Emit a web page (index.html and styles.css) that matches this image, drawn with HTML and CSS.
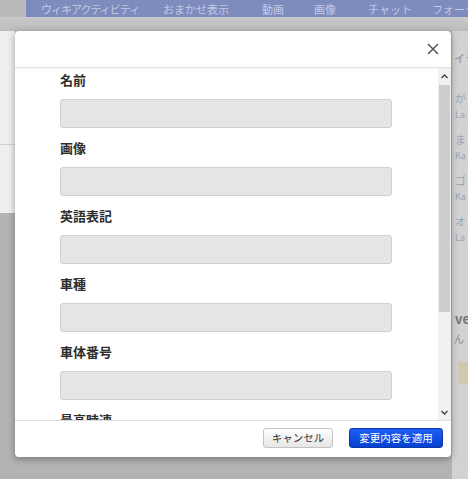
FILE: index.html
```html
<!DOCTYPE html>
<html lang="ja">
<head>
<meta charset="utf-8">
<title>編集</title>
<link rel="stylesheet" href="styles.css">
</head>
<body>
<div class="top">
  <div class="top-gap"></div>
  <nav class="navbar">
    <span class="nav-item w1">ウィキアクティビティ</span>
    <span class="nav-item w2">おまかせ表示</span>
    <span class="nav-item w3">動画</span>
    <span class="nav-item w4">画像</span>
    <span class="nav-item w5">チャット</span>
    <span class="nav-item">フォーラム</span>
  </nav>
</div>
<div class="band"></div>
<div class="main">
  <div class="leftcol">
    <div class="leftbox-a"></div>
    <div class="leftbox-b"></div>
  </div>
  <div class="center"></div>
  <aside class="rightcol">
    <div class="side-head">イラスト</div>
    <div class="side-list">
      <div class="side-item"><span class="jp">が</span><span class="en">La</span></div>
      <div class="side-item"><span class="jp">ま</span><span class="en">Ka</span></div>
      <div class="side-item"><span class="jp">ゴ</span><span class="en">Ka</span></div>
      <div class="side-item"><span class="jp">オ</span><span class="en">La</span></div>
    </div>
    <div class="side-title">ve!</div>
    <div class="side-sub">ん</div>
    <div class="side-pic"></div>
  </aside>
</div>

<div class="modal">
  <div class="modal-head">
    <svg class="close" width="12" height="12" viewBox="0 0 12 12"><path d="M1 1 L11 11 M11 1 L1 11" stroke="#555" stroke-width="1.5" fill="none"/></svg>
  </div>
  <div class="modal-body">
    <div class="content">
      <div class="field"><label class="label">名前</label><div class="input"></div></div>
      <div class="field"><label class="label">画像</label><div class="input"></div></div>
      <div class="field"><label class="label">英語表記</label><div class="input"></div></div>
      <div class="field"><label class="label">車種</label><div class="input"></div></div>
      <div class="field"><label class="label">車体番号</label><div class="input"></div></div>
      <div class="field"><label class="label">最高時速</label><div class="input"></div></div>
    </div>
    <div class="scrollbar">
      <div class="sb-btn"><svg width="7" height="5" viewBox="0 0 7 5"><path d="M0.5 4 L3.5 1 L6.5 4" stroke="#444" stroke-width="1.4" fill="none"/></svg></div>
      <div class="sb-thumb"></div>
      <div class="sb-track"></div>
      <div class="sb-btn"><svg width="7" height="5" viewBox="0 0 7 5"><path d="M0.5 1 L3.5 4 L6.5 1" stroke="#444" stroke-width="1.4" fill="none"/></svg></div>
    </div>
  </div>
  <div class="modal-foot">
    <button class="btn btn-cancel">キャンセル</button>
    <button class="btn btn-apply">変更内容を適用</button>
  </div>
</div>
</body>
</html>
```
FILE: styles.css
```css
* { box-sizing: border-box; }
html, body { margin: 0; padding: 0; }
body {
  width: 468px;
  height: 479px;
  overflow: hidden;
  background: #b3b3b3;
  font-family: "Noto Sans CJK JP", "Noto Sans", sans-serif;
  position: relative;
}

/* background page */
.top { display: flex; height: 17px; }
.top-gap { width: 26px; background: #bababa; }
.navbar {
  flex: 1;
  background: #7d8bbd;
  display: flex;
  align-items: center;
  padding-left: 15px;
  font-size: 11px;
  color: #c3cae4;
  white-space: nowrap;
  overflow: hidden;
}
.nav-item { flex: none; }
.w1 { width: 122px; letter-spacing: -1px; }
.w2 { width: 99px; }
.w3 { width: 52px; }
.w4 { width: 54px; }
.w5 { width: 64px; }
.band {
  height: 14px;
  background: linear-gradient(#c9c9c9, #bcbcbc);
}
.main { display: flex; height: 448px; }
.leftcol { width: 15px; flex: none; }
.leftbox-a { height: 114px; background: #eeeeee; border-bottom: 1px solid #d2d2d2; }
.leftbox-b { height: 68px; background: #efefef; }
.center { flex: 1; }
.rightcol {
  width: 16px;
  flex: none;
  margin-left: 1px;
  background: #d2d2d2;
  overflow: hidden;
  white-space: nowrap;
  color: #9aa3b8;
}
.side-head { padding: 20px 0 0 2px; font-size: 11px; line-height: 14px; color: #8e8e8e; }
.side-list { padding-top: 26px; }
.side-item {
  height: 41px;
  padding-left: 3px;
  display: flex;
  flex-direction: column;
  font-size: 11px;
  line-height: 14px;
}
.side-item .en { font-size: 9px; line-height: 11px; margin-top: 4px; }
.side-title { padding: 56px 0 0 3px; font-size: 13px; font-weight: bold; color: #777; line-height: 16px; }
.side-sub { margin-top: 5px; padding-left: 2px; font-size: 10px; color: #888; line-height: 14px; }
.side-pic { margin: 16px 0 0 6px; height: 22px; background: #cfc9b0; }

/* modal */
.modal {
  position: absolute;
  left: 15px;
  top: 31px;
  width: 436px;
  height: 426px;
  background: #fff;
  border-radius: 4px;
  box-shadow: 0 2px 7px rgba(0, 0, 0, 0.35);
  display: flex;
  flex-direction: column;
  overflow: hidden;
}
.modal-head {
  height: 37px;
  flex: none;
  display: flex;
  justify-content: flex-end;
  align-items: center;
  padding-right: 12px;
  border-bottom: 1px solid #e2e2e2;
  box-shadow: 0 1px 2px rgba(0, 0, 0, 0.05);
}
.modal-body { flex: 1; display: flex; min-height: 0; }
.content {
  flex: 1;
  padding: 3px 46px 0 45px;
  overflow: hidden;
}
.label {
  display: block;
  font-size: 13px;
  font-weight: bold;
  line-height: 18px;
  margin-bottom: 10px;
  color: #2e2e2e;
}
.input {
  height: 29px;
  border: 1px solid #d0d0d0;
  background: #e5e5e5;
  border-radius: 3px;
  margin-bottom: 11px;
}
.scrollbar {
  width: 13px;
  flex: none;
  display: flex;
  flex-direction: column;
  background: #f1f1f1;
}
.sb-btn {
  height: 17px;
  flex: none;
  display: flex;
  align-items: center;
  justify-content: center;
}
.sb-btn:last-child { height: 16px; }
.sb-thumb { height: 227px; flex: none; background: #cdcdcd; margin: 0 1px; }
.sb-track { flex: 1; }
.modal-foot {
  height: 37px;
  flex: none;
  border-top: 1px solid #e0e0e0;
  display: flex;
  justify-content: flex-end;
  align-items: flex-start;
  gap: 16px;
  padding: 7px 8px 0 0;
}
.btn {
  height: 20px;
  border-radius: 3px;
  font-family: "Noto Sans CJK JP", "Noto Sans", sans-serif;
  font-size: 10.5px;
  line-height: 18px;
  padding: 0;
  margin: 0;
}
.btn-cancel {
  width: 70px;
  background: linear-gradient(#fefefe, #e6e6e6);
  border: 1px solid #c2c2c2;
  color: #333;
}
.btn-apply {
  width: 94px;
  background: linear-gradient(#1d5ef2, #0540d2);
  border: 1px solid #0a38a8;
  color: #fff;
}
```
